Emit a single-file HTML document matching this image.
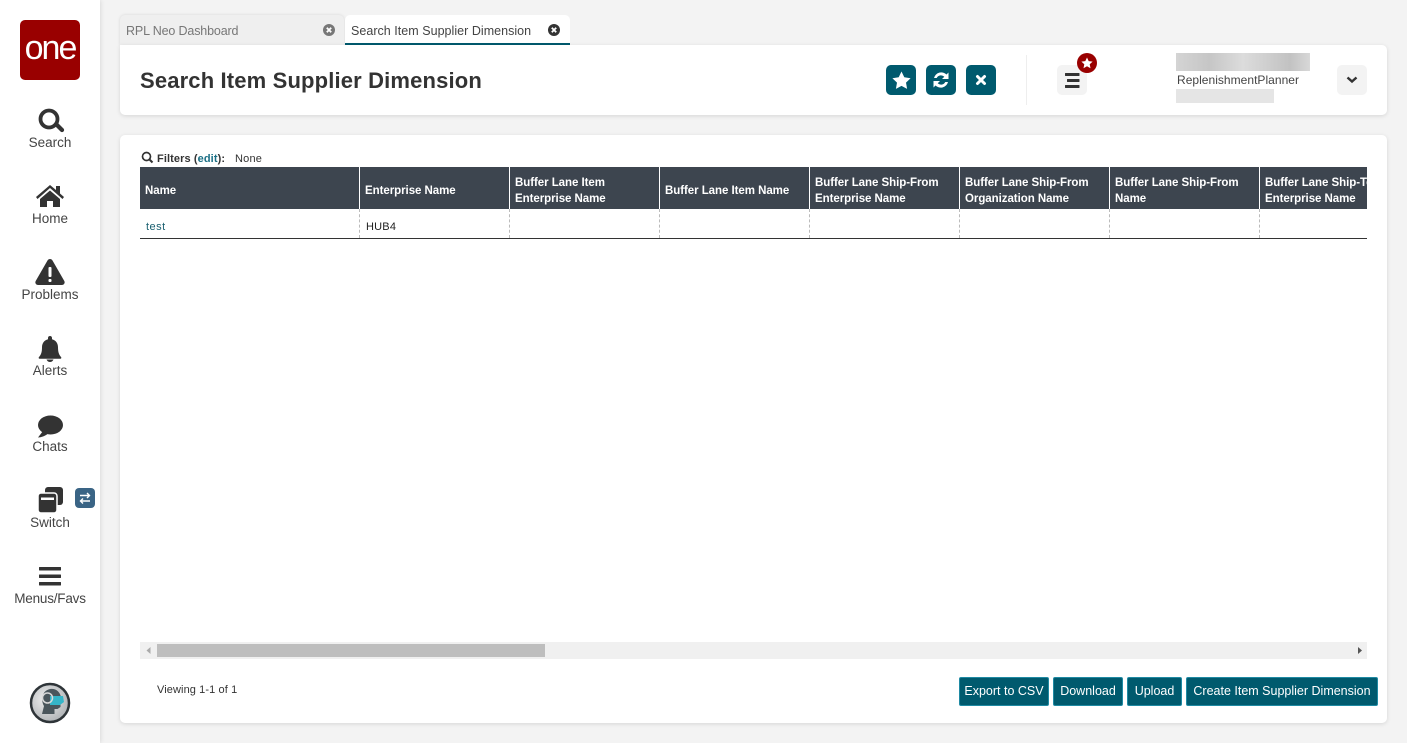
<!DOCTYPE html>
<html><head><meta charset="utf-8"><style>
html,body{margin:0;padding:0;width:1407px;height:743px;overflow:hidden;background:#f3f3f3;font-family:"Liberation Sans",sans-serif;color:#333}
.a{position:absolute;white-space:nowrap}
#side{position:absolute;left:0;top:0;width:100px;height:743px;background:#fff;box-shadow:1px 0 4px rgba(0,0,0,.1)}
.nl{position:absolute;left:0;width:100px;text-align:center;font-size:13.5px;line-height:16px;color:#444;letter-spacing:0}
.card{position:absolute;background:#fff;border-radius:5px;box-shadow:0 1px 4px rgba(0,0,0,.12)}
.tb{position:absolute;top:65px;width:30px;height:30px;border-radius:5px;background:#005a6e}
.gb{position:absolute;top:65px;width:30px;height:30px;border-radius:5px;background:#f3f3f3}
.th{position:absolute;top:167px;height:42px;background:#3d454f;color:#fff;font-weight:bold;font-size:11.5px;line-height:16px;box-sizing:border-box;padding:8px 0 0 5px;letter-spacing:-.05px;border-right:1px solid #fff;white-space:nowrap;overflow:hidden}
.td{position:absolute;top:209px;height:29px;border-right:1px dashed #bbb;box-sizing:border-box}
.btn{position:absolute;top:677px;height:29px;box-sizing:border-box;background:#005a6e;border:1px solid #1f8aa3;border-radius:2px;color:#fff;font-size:12.5px;line-height:27px;text-align:center;white-space:nowrap}
svg{position:absolute;overflow:visible}
</style></head><body>
<div id="side"></div>
<div class="a" style="left:20px;top:20px;width:60px;height:60px;background:#990000;border-radius:5px;color:#fff;font-size:34px;line-height:56px;text-align:center;letter-spacing:-2px">one</div>

<svg style="left:0;top:0" width="100" height="743">
<g fill="#333" stroke="none">
<circle cx="49" cy="119" r="8.500" fill="none" stroke="#333" stroke-width="3.800"/>
<path d="M54 125l3-3 6.500 6.500a2 2 0 0 1-3 3z"/>
<path d="M36 197l14-12 6 5v-4h4v7.500l4 3.500-1.500 2L50 188l-12.500 11z"/>
<path d="M40 199l10-8.500 10 8.500v8h-7v-6h-6v6h-7z"/>
<path d="M50 259c1 0 2 .6 2.500 1.500l11.800 20.500c1 1.800-.2 4-2.500 4H38.200c-2.300 0-3.500-2.200-2.500-4l11.800-20.500c.5-.9 1.500-1.500 2.500-1.500z"/>
<path d="M50 336c1.200 0 2 .8 2 2v1.200c3.800.9 6 4 6 8 0 5 1 7.500 3 9.800.7.800.2 1.800-.8 1.800H39.800c-1 0-1.500-1-.8-1.800 2-2.300 3-4.800 3-9.800 0-4 2.200-7.100 6-8V338c0-1.200.8-2 2-2z"/>
<path d="M46.500 359.500h7c-.5 1.500-2 2.500-3.500 2.500s-3-1-3.500-2.500z"/>
<ellipse cx="50.500" cy="425" rx="12.500" ry="9.500"/>
<path d="M43 431l-5 6.500c3 0 7-1.500 9.500-3.500z"/>
<rect x="45" y="487" width="18" height="18" rx="3"/>
<rect x="38" y="493" width="19" height="20" rx="3" stroke="#fff" stroke-width="1.500"/>
<rect x="39" y="567" width="22" height="3.500" rx=".5"/><rect x="39" y="574.500" width="22" height="3.500" rx=".5"/><rect x="39" y="582" width="22" height="3.500" rx=".5"/>
</g>
<rect x="48.500" y="267" width="3" height="10" rx="1" fill="#fff"/><rect x="48.500" y="279" width="3" height="3" rx="1" fill="#fff"/>
<rect x="41" y="497.500" width="13" height="2.500" fill="#fff"/>
<rect x="75" y="488" width="20" height="20" rx="4" fill="#3a6485"/>
<path d="M80 495.500h9.500M87 493l2.500 2.500-2.500 2.500M90 501h-9.500M83 498.500L80.500 501l2.500 2.500" stroke="#fff" stroke-width="1.400" fill="none"/>
<defs><radialGradient id="av" cx=".4" cy=".4" r=".7"><stop offset="0" stop-color="#f0f0f0"/><stop offset="1" stop-color="#a9adb0"/></radialGradient></defs>
<circle cx="50" cy="703" r="19" fill="url(#av)" stroke="#2e3438" stroke-width="2.500"/>
<path d="M42 714l2-8c-3-5-3-15 6-17 6-1 10 3 11 8l1.500 5-2 1v4l-3 2-3 0v5z" fill="#4a565c"/>
<path d="M50 696h13l1 6-4 3h-10z" fill="#35b5c8"/>
<circle cx="47.500" cy="698" r="5" fill="none" stroke="#d8d8d8" stroke-width="1.500"/>
</svg>
<div class="nl" style="top:135px">Search</div>
<div class="nl" style="top:211px">Home</div>
<div class="nl" style="top:287px">Problems</div>
<div class="nl" style="top:363px">Alerts</div>
<div class="nl" style="top:439px">Chats</div>
<div class="nl" style="top:515px">Switch</div>
<div class="nl" style="top:591px;letter-spacing:-.2px">Menus/Favs</div>

<div class="a" style="left:120px;top:15px;width:224px;height:30px;background:#efefef;border-radius:5px 5px 0 0;box-shadow:0 0 3px rgba(0,0,0,.12)"></div>
<div class="a" style="left:126px;top:23px;font-size:12.500px;line-height:16px;color:#777;letter-spacing:-.15px">RPL Neo Dashboard</div>
<div class="a" style="left:345px;top:15px;width:225px;height:30px;box-sizing:border-box;background:#fff;border-radius:5px 5px 0 0;border-bottom:2px solid #005a6e"></div>
<div class="a" style="left:351px;top:23px;font-size:12.500px;line-height:16px;color:#444;letter-spacing:.03px">Search Item Supplier Dimension</div>
<svg style="left:0;top:0" width="600" height="45">
<circle cx="329" cy="30" r="6" fill="#777"/><path d="M326.800 27.800l4.400 4.400m0-4.400l-4.400 4.400" stroke="#fff" stroke-width="1.800"/>
<circle cx="554" cy="30" r="6" fill="#333"/><path d="M551.800 27.800l4.400 4.400m0-4.400l-4.400 4.400" stroke="#fff" stroke-width="1.800"/>
</svg>

<div class="card" style="left:120px;top:45px;width:1267px;height:70px;border-top-left-radius:0"></div>
<div class="a" style="left:140px;top:67px;font-size:22px;line-height:28px;font-weight:bold;color:#333;letter-spacing:.15px">Search Item Supplier Dimension</div>
<div class="tb" style="left:886px"></div><div class="tb" style="left:926px"></div><div class="tb" style="left:966px"></div>
<div class="a" style="left:1026px;top:55px;width:1px;height:50px;background:#eee"></div>
<div class="gb" style="left:1057px"></div><div class="gb" style="left:1337px"></div>
<svg style="left:0;top:0" width="1407" height="120">
<path d="M901.500 71.500l2.800 5.800 6.300.9-4.600 4.400 1.100 6.300-5.600-3-5.600 3 1.100-6.300-4.600-4.400 6.300-.9z" fill="#fff"/>
<path d="M934 78a7.500 7.500 0 0 1 12.500-3.500l2-2v6.500h-6.500l2.300-2.300a4.800 4.800 0 0 0-7.600 1.300zM948 82a7.500 7.500 0 0 1-12.500 3.500l-2 2V81h6.500l-2.300 2.300a4.800 4.800 0 0 0 7.600-1.300z" fill="#fff"/>
<path d="M977.500 76.500l7 7m0-7l-7 7" stroke="#fff" stroke-width="3" stroke-linecap="round"/>
<rect x="1065" y="73" width="14.500" height="3" rx=".5" fill="#333"/><rect x="1067" y="79" width="12.500" height="3" rx=".5" fill="#333"/><rect x="1065" y="85" width="14.500" height="3" rx=".5" fill="#333"/>
<circle cx="1087" cy="63" r="10" fill="#990000"/>
<path d="M1087 57.500l1.700 3.600 3.900.5-2.900 2.700.8 3.900-3.500-1.900-3.500 1.900.8-3.900-2.900-2.700 3.900-.5z" fill="#fff"/>
<path d="M1347.500 77.500l4.500 4 4.500-4" fill="none" stroke="#333" stroke-width="2.400"/>
</svg>
<div class="a" style="left:1176px;top:53px;width:134px;height:18px;background:linear-gradient(90deg,#d4d4d4 0,#c6c6c6 25%,#dcdcdc 50%,#c2c2c2 85%,#d8d8d8 100%)"></div>
<div class="a" style="left:1177px;top:72px;font-size:12px;line-height:16px;color:#444;letter-spacing:.03px">ReplenishmentPlanner</div>
<div class="a" style="left:1176px;top:89px;width:98px;height:14px;background:#e5e5e5"></div>

<div class="card" style="left:120px;top:135px;width:1267px;height:588px"></div>
<svg style="left:0;top:0" width="160" height="170">
<circle cx="146.500" cy="156.500" r="4" fill="none" stroke="#333" stroke-width="1.700"/><path d="M149.500 159.500l3 3" stroke="#333" stroke-width="2"/>
</svg>
<div class="a" style="left:157px;top:151px;font-size:11px;line-height:16px;font-weight:bold;color:#333;letter-spacing:.1px">Filters (<span style="color:#1a6f85">edit</span>):</div>
<div class="a" style="left:235px;top:151px;font-size:11px;line-height:16px;color:#333;letter-spacing:.2px">None</div>

<div class="th" style="left:140px;width:220px;padding-top:16px">Name</div>
<div class="th" style="left:360px;width:150px;padding-top:16px">Enterprise Name</div>
<div class="th" style="left:510px;width:150px">Buffer Lane Item<br>Enterprise Name</div>
<div class="th" style="left:660px;width:150px;padding-top:16px">Buffer Lane Item Name</div>
<div class="th" style="left:810px;width:150px">Buffer Lane Ship-From<br>Enterprise Name</div>
<div class="th" style="left:960px;width:150px">Buffer Lane Ship-From<br>Organization Name</div>
<div class="th" style="left:1110px;width:150px">Buffer Lane Ship-From<br>Name</div>
<div class="th" style="left:1260px;width:107px;border-right:0">Buffer Lane Ship-To<br>Enterprise Name</div>
<div class="td" style="left:140px;width:220px"></div><div class="td" style="left:360px;width:150px"></div><div class="td" style="left:510px;width:150px"></div><div class="td" style="left:660px;width:150px"></div><div class="td" style="left:810px;width:150px"></div><div class="td" style="left:960px;width:150px"></div><div class="td" style="left:1110px;width:150px"></div>
<div class="a" style="left:140px;top:238px;width:1227px;height:1px;background:#333"></div>
<div class="a" style="left:146px;top:219px;font-size:11px;line-height:16px;color:#1a6070;letter-spacing:.5px">test</div>
<div class="a" style="left:366px;top:219px;font-size:11px;line-height:16px;color:#222;letter-spacing:.2px">HUB4</div>

<div class="a" style="left:140px;top:642px;width:1227px;height:17px;background:#f0f0f0"></div>
<div class="a" style="left:157px;top:644px;width:388px;height:13px;background:#bebebe"></div>
<svg style="left:0;top:640px" width="1407" height="20">
<path d="M150.500 7l-4 3.500 4 3.500z" fill="#aaa"/><path d="M1358 7l4 3.500-4 3.500z" fill="#555"/>
</svg>
<div class="a" style="left:157px;top:682px;font-size:11px;line-height:16px;color:#333;letter-spacing:.1px">Viewing 1-1 of 1</div>
<div class="btn" style="left:959px;width:90px">Export to CSV</div>
<div class="btn" style="left:1053px;width:70px">Download</div>
<div class="btn" style="left:1127px;width:55px">Upload</div>
<div class="btn" style="left:1186px;width:192px">Create Item Supplier Dimension</div>
</body></html>
